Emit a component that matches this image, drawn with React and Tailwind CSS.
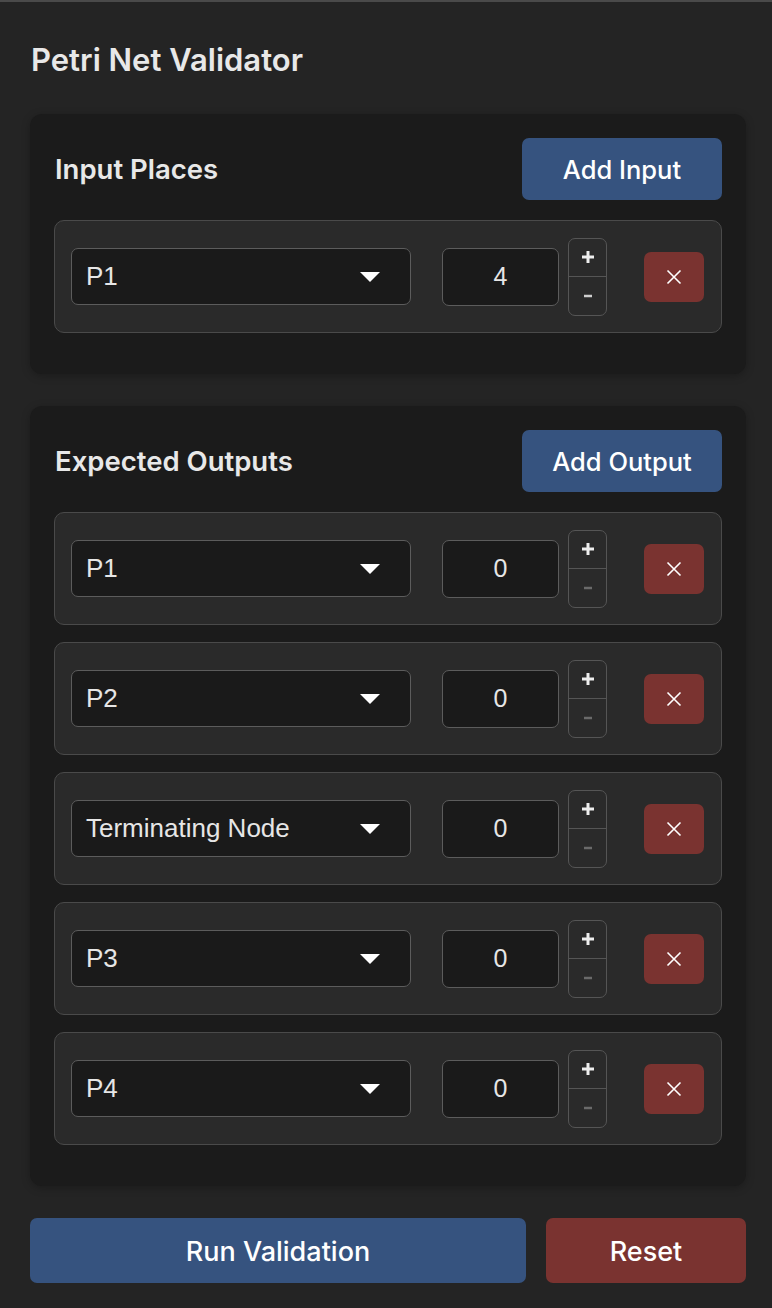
import React from "react";

const inputs = [{ name: "P1", value: 4 }];
const outputs = [
  { name: "P1", value: 0 },
  { name: "P2", value: 0 },
  { name: "Terminating Node", value: 0 },
  { name: "P3", value: 0 },
  { name: "P4", value: 0 },
];

function Row({ name, value }) {
  const minusDisabled = value <= 0;
  return (
    <div className="h-[113px] rounded-[10px] border-[1.5px] border-[#4a4a4a] bg-[#2a2a2a] flex items-center pl-[16px]">
      <div className="w-[340px] h-[57px] rounded-[7px] border-[1.5px] border-[#5c5c5c] bg-[#1a1a1a] flex items-center justify-between pl-[14px] pr-[30px]">
        <span className="text-[26px] text-[#e6e6e6] font-['Liberation_Sans',Arial,sans-serif]">{name}</span>
        <svg width="20" height="10" viewBox="0 0 20 10">
          <path d="M0 0 L20 0 L10 10 Z" fill="#ffffff" />
        </svg>
      </div>
      <div className="ml-[31px] w-[117px] h-[58px] rounded-[7px] border-[1.5px] border-[#5c5c5c] bg-[#1a1a1a] flex items-center justify-center">
        <span className="text-[25px] text-[#e6e6e6] font-['Liberation_Sans',Arial,sans-serif]">{value}</span>
      </div>
      <div className="ml-[9px] w-[39px] h-[78px] rounded-[7px] border-[1.5px] border-[#555555] flex flex-col overflow-hidden">
        <div className="flex-1 flex items-center justify-center border-b-[1.5px] border-[#555555] text-[#eeeeee]">
          <svg width="14" height="14" viewBox="0 0 14 14">
            <path d="M7 1 V13 M1 7 H13" stroke="currentColor" strokeWidth="3" />
          </svg>
        </div>
        <div className={"flex-1 flex items-center justify-center " + (minusDisabled ? "text-[#6a6a6a]" : "text-[#cfcfcf]")}>
          <svg width="10" height="4" viewBox="0 0 10 4">
            <path d="M1 2 H9" stroke="currentColor" strokeWidth="2.5" />
          </svg>
        </div>
      </div>
      <div className="ml-[37px] w-[60px] h-[50px] rounded-[7px] bg-[#7a3330] flex items-center justify-center">
        <svg width="16" height="16" viewBox="0 0 16 16">
          <path d="M1.5 1.5 L14.5 14.5 M14.5 1.5 L1.5 14.5" stroke="#ffffff" strokeWidth="1.6" />
        </svg>
      </div>
    </div>
  );
}

function Panel({ title, button, rows }) {
  return (
    <section className="rounded-[12px] bg-[#1b1b1b] px-[24px] pt-[24px] pb-[41px] shadow-[0_2px_8px_rgba(0,0,0,0.25)]">
      <div className="flex items-center justify-between">
        <h2 className="ml-[1px] pt-[2px] text-[27.5px] font-semibold text-[#e8e8e8]">{title}</h2>
        <button className="w-[200px] h-[62px] pt-[2px] rounded-[7px] bg-[#36537f] text-[25.5px] font-medium text-white">
          {button}
        </button>
      </div>
      <div className="mt-[20px] flex flex-col gap-[17px]">
        {rows.map((r, i) => (
          <Row key={i} {...r} />
        ))}
      </div>
    </section>
  );
}

export default function App() {
  return (
    <div className="min-h-[1308px] bg-[#242424] border-t-2 border-[#4a4a4a] pl-[30px] pr-[26px] pt-[37px] pb-[25px] font-['Inter',sans-serif]">
      <h1 className="ml-[1px] text-[31px] font-semibold text-[#e8e8e8] leading-[42px]">Petri Net Validator</h1>
      <div className="mt-[33px] flex flex-col gap-[32px]">
        <Panel title="Input Places" button="Add Input" rows={inputs} />
        <Panel title="Expected Outputs" button="Add Output" rows={outputs} />
      </div>
      <div className="mt-[32px] flex gap-[20px]">
        <button className="flex-1 h-[65px] pt-[3px] rounded-[7px] bg-[#36537f] text-[27px] font-medium text-white">
          Run Validation
        </button>
        <button className="w-[200px] h-[65px] pt-[3px] rounded-[7px] bg-[#7a3330] text-[27px] font-medium text-white">
          Reset
        </button>
      </div>
    </div>
  );
}
